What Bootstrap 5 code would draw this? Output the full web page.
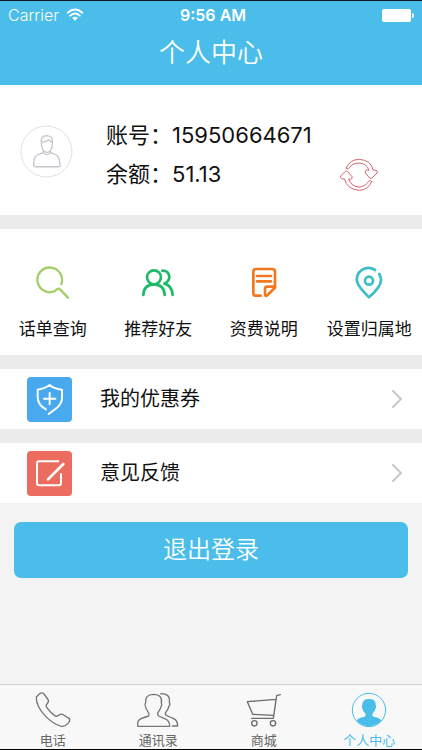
<!DOCTYPE html>
<html lang="zh-CN">
<head>
<meta charset="utf-8">
<meta name="viewport" content="width=device-width, initial-scale=1">
<title>个人中心</title>
<link href="https://cdn.jsdelivr.net/npm/bootstrap@5.3.0/dist/css/bootstrap.min.css" rel="stylesheet">
<style>
:root { --sky: #4abdea; }
body { font-family: Inter, "Noto Sans CJK SC", sans-serif; background: #f3f3f3; color: #111; }
svg { display: block; fill: none; stroke-linecap: round; stroke-linejoin: round; }
a { color: inherit; text-decoration: none; }
.screen { border-top: 1px solid #101820; border-bottom: 1px solid #000; }
.top-bar { background: var(--sky); color: #fff; }
.status { height: 28px; font-size: 16px; line-height: 28px; padding: 0 8px; }
.status-side { flex: 1 1 0; }
.carrier { font-weight: 300; }
.clock { font-weight: 600; padding-left: 4px; }
.page-title { font-size: 26px; font-weight: 350; line-height: 48px; height: 56px; }
.band { border-bottom: 14px solid #ebebeb; }
.profile { padding: 31px 43px 21px 20px; }
.avatar { padding-bottom: 8px; }
.facts { margin-left: 33px; font-size: 22px; line-height: 39px; }
.facts dt { font-weight: 400; }
.refresh { padding: 0 0 2px; }
.shortcuts { padding: 37px 0 13px; font-size: 17px; }
.shortcuts a { line-height: 26px; }
.shortcuts svg { margin-bottom: 16px; }
.entry { box-sizing: content-box; height: 60px; padding: 0 18px 0 27px; font-size: 20px; }
.entry-name { margin-left: 28px; }
.logout { background: var(--sky); color: #fff; font-size: 24px; font-weight: 350; line-height: 36px; padding: 10px; border: 0; border-radius: 7px; }
.logout-wrap { padding: 19px 14px; }
.tabs { background: #f8f8f8; border-top: 1px solid #d2d2d2; padding: 6px 0 1px; font-size: 13px; line-height: 16px; color: #666; }
.tabs svg { margin-bottom: 3px; }
.tabs .active { color: var(--sky); }
</style>
</head>
<body>
<div class="screen d-flex flex-column min-vh-100">
  <header class="top-bar text-center">
    <div class="status d-flex align-items-center">
      <div class="status-side d-flex align-items-center gap-2">
        <span class="carrier">Carrier</span>
        <svg width="16" height="14" viewBox="198 22 50 40" stroke="#fff" stroke-width="6" stroke-linecap="butt" aria-label="Wi-Fi"><path d="M200 35Q223 15 246 35M208 44Q223 31 238 44"/><path d="M214 51Q223 44 232 51L223 60Z" fill="#fff" stroke="none"/></svg>
      </div>
      <span class="clock">9:56 AM</span>
      <div class="status-side d-flex justify-content-end">
        <svg width="32" height="13" viewBox="0 0 32 13" aria-label="电池"><rect width="29" height="13" rx="2" fill="#fff"/><path d="M30 4Q32 4 32 6.500Q32 9 30 9Z" fill="#fff"/></svg>
      </div>
    </div>
    <h1 class="page-title mb-0">个人中心</h1>
  </header>

  <main>
    <section class="profile band bg-white d-flex align-items-center">
      <div class="avatar">
        <svg width="53" height="53" viewBox="60 43 160 160" stroke="#c5c6ce" stroke-width="4" aria-label="头像"><circle cx="140" cy="123" r="77" stroke="#dedfe5" stroke-width="3"/><path d="M124 92Q123 76 141 75Q160 77 158 94Q158 125 141 126Q125 125 124 92ZM124 95Q140 94 147 87Q151 94 158 95M131 121Q130 128 121 130Q104 133 102 151L101 165Q102 169 107 169H176Q182 169 181 164L179 150Q177 134 162 130Q151 128 151 120M131 127Q141 138 151 127"/></svg>
      </div>
      <dl class="facts mb-0">
        <div class="d-flex"><dt>账号：</dt><dd class="mb-0">15950664671</dd></div>
        <div class="d-flex"><dt>余额：</dt><dd class="mb-0">51.13</dd></div>
      </dl>
      <button type="button" class="btn refresh border-0 ms-auto align-self-end" aria-label="刷新余额">
        <svg width="40" height="34" viewBox="384 144 120 102" stroke="#d46673" stroke-width="3"><path d="M406 174Q417 148 445 148Q481 151 486 180L495 181Q501 183 498 189L483 204Q480 207 476 204L463 189Q460 182 467 180L474 181Q467 160 444 159Q424 159 413 176Q407 180 406 174Z"/><path d="M482 215Q471 241 443 241Q407 237 401 207L392 206Q386 203 389 198L402 185Q406 181 410 185L423 200Q426 206 419 208L413 207Q421 230 444 231Q462 230 473 214Q480 208 482 215Z"/></svg>
      </button>
    </section>

    <nav class="shortcuts band bg-white row g-0 text-center" aria-label="快捷功能">
      <a href="#calls" class="col-3 d-flex flex-column align-items-center">
        <svg width="34" height="34" viewBox="108 48 102 102" stroke="#a4ce68" stroke-width="7"><path d="M184 102A37 37 0 1 0 165 123Q175 112 181 119L204 143"/></svg>
        话单查询</a>
      <a href="#invite" class="col-3 d-flex flex-column align-items-center">
        <svg width="34" height="34" viewBox="426 48 102 102" stroke="#1dba6a" stroke-width="8"><circle cx="465" cy="82" r="21"/><path d="M433 135Q434 104 465 103Q496 104 497 135M490 62Q510 62 511 82Q510 94 496 101Q519 106 521 135"/></svg>
        推荐好友</a>
      <a href="#rates" class="col-3 d-flex flex-column align-items-center">
        <svg width="34" height="34" viewBox="107 48 102 102" stroke="#f07820" stroke-width="8"><path d="M148 137H132Q126 137 126 130V65Q126 57 134 57H183Q191 57 191 65V113L166 137Q161 140 161 133V117Q161 110 168 110H190M137 78H179M137 94H179"/></svg>
        资费说明</a>
      <a href="#region" class="col-3 d-flex flex-column align-items-center">
        <svg width="34" height="34" viewBox="423 48 102 102" stroke="#3bbec6" stroke-width="8"><circle cx="474" cy="92" r="12"/><path d="M492 60Q473 48 454 59Q435 71 438 94Q441 110 474 142Q509 111 510 91Q510 81 505 72"/></svg>
        设置归属地</a>
    </nav>

    <a href="#coupons" class="entry band bg-white d-flex align-items-center">
      <svg width="45" height="45" viewBox="81 48 135 135" stroke="#fff" stroke-width="6"><rect x="81" y="48" width="135" height="135" rx="12" fill="#48a9ee" stroke="none"/><path d="M138 145Q113 132 113 108V86Q136 82 149 72Q163 84 186 86V110Q186 130 166 144L146 159M149 96V130M132 113H166"/></svg>
      <span class="entry-name">我的优惠券</span>
      <svg class="ms-auto" width="14" height="20" viewBox="0 0 14 20" stroke="#c7c7cc" stroke-width="2"><path d="M3 2L11 10L3 18"/></svg>
    </a>
    <a href="#feedback" class="entry bg-white d-flex align-items-center">
      <svg width="45" height="45" viewBox="81 269 135 135" stroke="#fff" stroke-width="6"><rect x="81" y="269" width="135" height="135" rx="12" fill="#ec6d60" stroke="none"/><path d="M175 300H117Q111 300 111 306V366Q111 372 117 372H177Q183 372 183 366V338"/><path d="M190 308L144 354" stroke-width="8"/></svg>
      <span class="entry-name">意见反馈</span>
      <svg class="ms-auto" width="14" height="20" viewBox="0 0 14 20" stroke="#c7c7cc" stroke-width="2"><path d="M3 2L11 10L3 18"/></svg>
    </a>
    <div class="logout-wrap"><button type="button" class="btn logout w-100">退出登录</button></div>
  </main>

  <nav class="tabs row g-0 text-center mt-auto" aria-label="主导航">
    <a href="#phone" class="col-3 d-flex flex-column align-items-center">
      <svg width="38" height="38" viewBox="102 47 114 114" stroke="#777" stroke-width="4"><path d="M109 65L118 56Q126 49 132 56L143 71Q148 77 143 83L138 90Q138 96 151 109Q164 122 169 123L181 117Q186 115 191 119L207 129Q212 134 206 142Q194 155 184 153Q158 146 135 121Q108 92 109 65Z"/></svg>
      电话</a>
    <a href="#contacts" class="col-3 d-flex flex-column align-items-center">
      <svg width="44" height="38" viewBox="410 47 132 114" stroke="#777" stroke-width="4"><path d="M415 153V143Q416 132 430 128L448 122Q451 118 447 111Q439 101 438 92Q435 87 439 82Q436 58 462 57Q491 58 486 83Q489 88 485 94Q483 103 476 111Q473 118 478 122L496 130Q511 135 511 153Z"/><path d="M484 55Q514 55 510 81Q514 87 509 92Q507 102 499 111Q496 118 502 121L519 128Q535 133 535 152H519"/></svg>
      通讯录</a>
    <a href="#mall" class="col-3 d-flex flex-column align-items-center">
      <svg width="38" height="38" viewBox="102 47 114 114" stroke="#6d6d6d" stroke-width="4"><path d="M208 58L197 61L187 129H122M195 72L109 79L125 117L188 120"/><circle cx="130" cy="144" r="8"/><circle cx="186" cy="144" r="8"/></svg>
      商城</a>
    <a href="#me" class="active col-3 d-flex flex-column align-items-center" aria-current="page">
      <svg width="38" height="38" viewBox="417 47 114 114" stroke="#4abdea" stroke-width="3"><circle cx="474" cy="104" r="50"/><path d="M437 136Q439 128 460 124Q467 121 462 113Q455 108 454 99Q451 94 454 88Q454 71 474 71Q495 71 494 88Q497 94 494 99Q492 108 486 113Q481 121 488 124Q509 128 511 136A49 49 0 0 1 437 136Z" fill="#4abdea" stroke="none"/></svg>
      个人中心</a>
  </nav>
</div>
<script src="https://cdn.jsdelivr.net/npm/bootstrap@5.3.0/dist/js/bootstrap.bundle.min.js"></script>
</body>
</html>
